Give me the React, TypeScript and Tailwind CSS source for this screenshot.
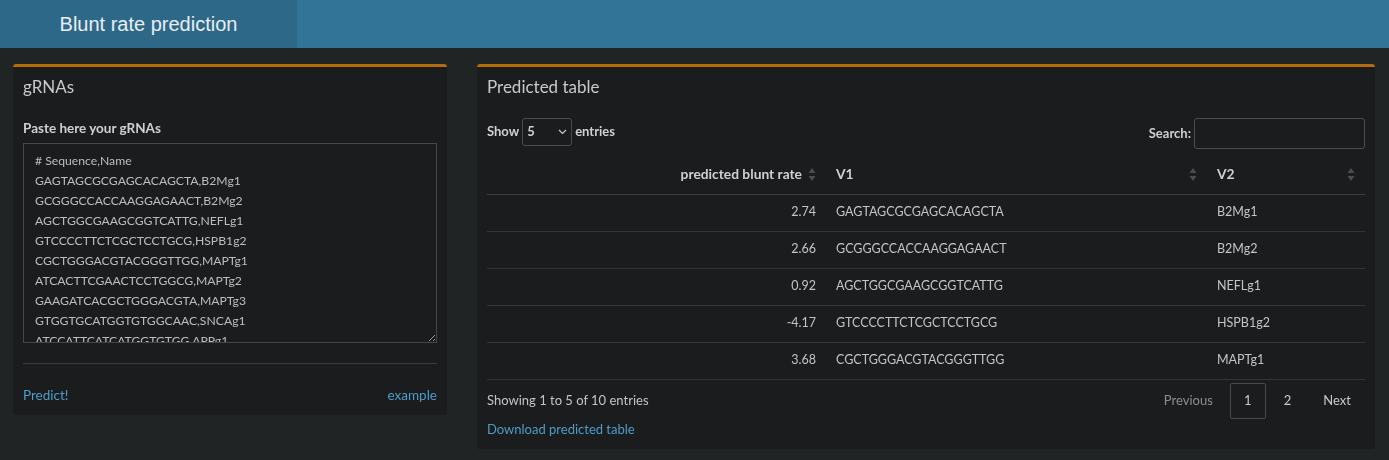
import React from 'react';

const GRNAS = [
  '# Sequence,Name',
  'GAGTAGCGCGAGCACAGCTA,B2Mg1',
  'GCGGGCCACCAAGGAGAACT,B2Mg2',
  'AGCTGGCGAAGCGGTCATTG,NEFLg1',
  'GTCCCCTTCTCGCTCCTGCG,HSPB1g2',
  'CGCTGGGACGTACGGGTTGG,MAPTg1',
  'ATCACTTCGAACTCCTGGCG,MAPTg2',
  'GAAGATCACGCTGGGACGTA,MAPTg3',
  'GTGGTGCATGGTGTGGCAAC,SNCAg1',
  'ATCCATTCATCATGGTGTGG,APPg1',
  'GCAGCAGCGGCAGGAGCAGG,APPg2',
];

const ROWS = [
  { rate: '2.74', v1: 'GAGTAGCGCGAGCACAGCTA', v2: 'B2Mg1' },
  { rate: '2.66', v1: 'GCGGGCCACCAAGGAGAACT', v2: 'B2Mg2' },
  { rate: '0.92', v1: 'AGCTGGCGAAGCGGTCATTG', v2: 'NEFLg1' },
  { rate: '-4.17', v1: 'GTCCCCTTCTCGCTCCTGCG', v2: 'HSPB1g2' },
  { rate: '3.68', v1: 'CGCTGGGACGTACGGGTTGG', v2: 'MAPTg1' },
];

const SortIcon = () => (
  <svg width="8" height="15" viewBox="0 0 8 15" className="shrink-0">
    <path d="M4 1 L7.5 6 L0.5 6 Z" fill="#4a4d50" />
    <path d="M4 14 L7.5 9 L0.5 9 Z" fill="#4a4d50" />
  </svg>
);

export default function App() {
  return (
    <div
      className="min-h-[460px] bg-[#202425] text-[#c9c9c9]"
      style={{ fontFamily: 'Lato, "Noto Sans", sans-serif' }}
    >
      {/* Header */}
      <div className="flex h-12 bg-[#317497]">
        <div
          className="flex w-[297px] items-center justify-center bg-[#2e6888] text-[20px] text-[#e8eef2]"
          style={{ fontFamily: '"Liberation Sans", Arial, sans-serif' }}
        >
          Blunt rate prediction
        </div>
      </div>

      <div className="flex items-start gap-[30px] px-[13px] pt-4">
        {/* gRNAs box */}
        <div className="w-[434px] rounded-[3px] border-t-[3px] border-[#b36d0b] bg-[#1b1c1e]">
          <div className="px-[10px] pt-[8px] text-[17px] leading-[24px] text-[#c9c9c9]">gRNAs</div>
          <div className="px-[10px] pt-[19px]">
            <div className="text-[13.5px] font-bold leading-[20px] text-[#d0d0d0]">Paste here your gRNAs</div>
            <textarea
              readOnly
              className="mt-[5px] block h-[200px] w-full resize-y border border-[#444749] bg-[#1b1c1e] px-[11px] py-[7px] text-[12.2px] leading-[20px] text-[#bdbdbd] outline-none"
              value={GRNAS.join('\n')}
            />
            <div className="mt-[20px] border-t border-[#3a3c3e]" />
            <div className="flex items-center justify-between pb-[10px] pt-[21px] text-[13.5px] leading-[20px] text-[#4e9cc9]">
              <span>Predict!</span>
              <span>example</span>
            </div>
          </div>
        </div>

        {/* Predicted table box */}
        <div className="w-[898px] rounded-[3px] border-t-[3px] border-[#b36d0b] bg-[#1b1c1e] px-[10px] pb-[10px]">
          <div className="pt-[8px] text-[17px] leading-[24px] text-[#c9c9c9]">Predicted table</div>
          <div className="mt-[19px] flex items-start justify-between text-[13px] font-bold text-[#d0d0d0]">
            <div className="flex h-[28px] items-center gap-[3px]">
              <span>Show</span>
              <div className="flex h-[28px] w-[50px] items-center justify-between rounded-[3px] border border-[#4a4d50] px-[4px]">
                <span>5</span>
                <svg width="9" height="6" viewBox="0 0 9 6">
                  <path d="M1 1 L4.5 4.5 L8 1" stroke="#c9c9c9" strokeWidth="1.2" fill="none" />
                </svg>
              </div>
              <span>entries</span>
            </div>
            <div className="flex h-[31px] items-center gap-[3px]">
              <span>Search:</span>
              <div className="h-[31px] w-[171px] rounded-[3px] border border-[#4a4d50]" />
            </div>
          </div>

          <table className="mt-[7px] w-full table-fixed border-collapse text-[12.5px]">
            <colgroup>
              <col className="w-[339px]" />
              <col className="w-[381px]" />
              <col />
            </colgroup>
            <thead>
              <tr className="border-b border-[#3c3e40] text-[13.8px] text-[#d0d0d0]">
                <th className="h-[38px] px-[10px] font-bold">
                  <div className="flex items-center justify-end gap-[6px]">
                    <span>predicted blunt rate</span>
                    <SortIcon />
                  </div>
                </th>
                <th className="px-[10px] text-left font-bold">
                  <div className="flex items-center justify-between">
                    <span>V1</span>
                    <SortIcon />
                  </div>
                </th>
                <th className="px-[10px] text-left font-bold">
                  <div className="flex items-center justify-between">
                    <span>V2</span>
                    <SortIcon />
                  </div>
                </th>
              </tr>
            </thead>
            <tbody>
              {ROWS.map((r) => (
                <tr key={r.v1} className="border-b border-[#323436] text-[#c4c4c4]">
                  <td className="h-[37px] px-[10px] text-right">{r.rate}</td>
                  <td className="px-[10px]">{r.v1}</td>
                  <td className="px-[10px]">{r.v2}</td>
                </tr>
              ))}
            </tbody>
          </table>

          <div className="flex items-center justify-between pt-[3px] text-[13px]">
            <span className="text-[#c4c4c4]">Showing 1 to 5 of 10 entries</span>
            <div className="flex items-center text-[13px]">
              <span className="px-[14px] text-[#8e8e8e]">Previous</span>
              <span className="ml-[3px] flex h-[36px] w-[36px] items-center justify-center rounded-[2px] border border-[#474a4d] text-[#c9c9c9]">1</span>
              <span className="px-[18px] text-[#c9c9c9]">2</span>
              <span className="px-[14px] text-[#c9c9c9]">Next</span>
            </div>
          </div>
          <div className="pt-[0px] text-[13px] leading-[20px] text-[#4e9cc9]">Download predicted table</div>
        </div>
      </div>
    </div>
  );
}
